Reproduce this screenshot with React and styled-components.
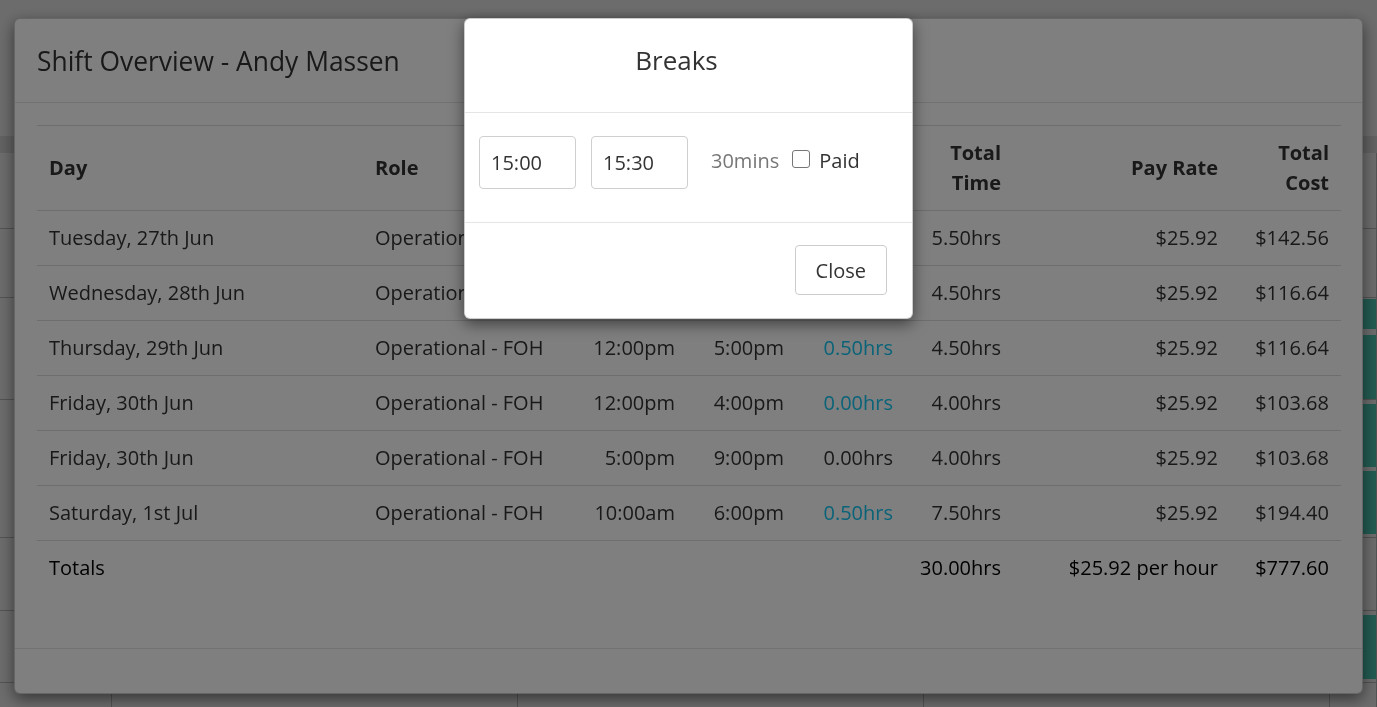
import React from 'react';
import styled, { createGlobalStyle } from 'styled-components';

const GlobalStyle = createGlobalStyle`
  html, body { margin: 0; padding: 0; }
  body {
    font-family: "Open Sans", "Noto Sans", sans-serif;
    color: #333;
    background: #fff;
    overflow: hidden;
  }
  *, *::before, *::after { box-sizing: border-box; }
`;

/* ---------- background roster page ---------- */
const Page = styled.div`
  height: 707px;
  overflow: hidden;
  background: #fff;
  display: flex;
  flex-direction: column;
`;
const PageTop = styled.div`
  height: 136px;
  flex: none;
`;
const Band = styled.div`
  height: 17px;
  flex: none;
  background: #e6e6e6;
`;
const RosterRow = styled.div`
  flex: none;
  display: grid;
  grid-template-columns: 112px 406px 406px 406px 1fr;
  height: ${(p) => p.$h}px;
  border-bottom: 1px solid #c4c4c4;
`;
const RosterCell = styled.div`
  border-right: 1px solid #c4c4c4;
  display: flex;
  flex-direction: column;
  gap: ${(p) => p.$gap || 0}px;
  padding: ${(p) => p.$pad || 0}px 0 ${(p) => p.$pad || 0}px 4px;
`;
const ShiftBlock = styled.div`
  height: ${(p) => p.$h}px;
  background: #52d8c1;
  border-radius: 2px 0 0 2px;
`;

/* ---------- overlays ---------- */
const Backdrop = styled.div`
  position: fixed;
  inset: 0;
  background: rgba(0, 0, 0, ${(p) => p.$o});
`;
const ModalLayer = styled.div`
  position: fixed;
  inset: 0;
  display: flex;
  justify-content: center;
  align-items: flex-start;
  padding-top: 18px;
`;
const ModalBox = styled.div`
  width: ${(p) => p.$w}px;
  background: #fff;
  border: 1px solid rgba(0, 0, 0, 0.2);
  border-radius: 6px;
  box-shadow: 0 5px 15px rgba(0, 0, 0, 0.5);
  overflow: hidden;
`;

/* ---------- shift overview modal ---------- */
const ShiftHeader = styled.div`
  height: 84px;
  display: flex;
  align-items: center;
  padding: 0 22px;
  border-bottom: 1px solid #e5e5e5;
`;
const Title = styled.h4`
  margin: 0;
  font-size: ${(p) => p.$size || 26}px;
  font-weight: 400;
  line-height: 36px;
  color: #333;
  text-align: ${(p) => p.$align || 'left'};
`;
const ShiftBody = styled.div`
  padding: 22px 21px 53px 22px;
`;
const Table = styled.div`
  display: flex;
  flex-direction: column;
`;
const Row = styled.div`
  display: grid;
  grid-template-columns: 326px 207px 117px 109px 109px 108px 217px 1fr;
  align-items: center;
  border-top: 1px solid #dcdcdc;
  min-height: ${(p) => (p.$head ? 85 : 55)}px;
  color: ${(p) => (p.$total ? '#000' : '#333')};
`;
const Cell = styled.div`
  padding: 12px;
  font-size: 20px;
  line-height: 30px;
  font-weight: ${(p) => (p.$bold ? 700 : 400)};
  text-align: ${(p) => (p.$right ? 'right' : 'left')};
  color: ${(p) => (p.$link ? '#14c6f0' : 'inherit')};
  white-space: ${(p) => (p.$bold ? 'normal' : 'nowrap')};
`;
const ShiftFooter = styled.div`
  height: 45px;
  border-top: 1px solid #e5e5e5;
`;

/* ---------- breaks modal ---------- */
const BreaksHeader = styled.div`
  height: 94px;
  padding: 23px 24px 0 0;
  border-bottom: 1px solid #e5e5e5;
`;
const BreaksBody = styled.div`
  height: 110px;
  padding: 23px 14px 0 14px;
  border-bottom: 1px solid #e5e5e5;
  display: flex;
  align-items: flex-start;
`;
const BreakRow = styled.div`
  display: flex;
  align-items: center;
`;
const TimeInput = styled.input`
  width: 97px;
  height: 53px;
  margin-right: ${(p) => p.$mr || 0}px;
  padding: 0 11px;
  border: 1px solid #cfcfcf;
  border-radius: 4px;
  font: inherit;
  font-size: 20px;
  color: #333;
  background: #fff;
  outline: none;
`;
const Duration = styled.span`
  margin: 0 0 3px 23px;
  font-size: 20px;
  line-height: 30px;
  color: #777;
`;
const CheckLabel = styled.label`
  display: flex;
  align-items: center;
  margin: 0 0 3px 13px;
  font-size: 20px;
  line-height: 30px;
  color: #333;
`;
const CheckBox = styled.input`
  appearance: none;
  width: 18px;
  height: 18px;
  margin: 0 9px 4px 0;
  border: 1px solid #767676;
  border-radius: 3px;
  background: #fff;
`;
const BreaksFooter = styled.div`
  height: 95px;
  padding: 22px 25px 0 0;
  display: flex;
  justify-content: flex-end;
  align-items: flex-start;
`;
const Button = styled.button`
  height: 50px;
  padding: 0 20px;
  border: 1px solid #cccccc;
  border-radius: 4px;
  background: #fff;
  font: inherit;
  font-size: 20px;
  color: #333;
  cursor: pointer;
`;

const headers = [
  ['Day', false],
  ['Role', false],
  ['Start', true],
  ['Finish', true],
  ['Breaks', true],
  ['Total Time', true],
  ['Pay Rate', true],
  ['Total Cost', true],
];

const shifts = [
  ['Tuesday, 27th Jun', '11:00am', '5:00pm', '0.50hrs', true, '5.50hrs', '$142.56'],
  ['Wednesday, 28th Jun', '12:00pm', '5:00pm', '0.50hrs', true, '4.50hrs', '$116.64'],
  ['Thursday, 29th Jun', '12:00pm', '5:00pm', '0.50hrs', true, '4.50hrs', '$116.64'],
  ['Friday, 30th Jun', '12:00pm', '4:00pm', '0.00hrs', true, '4.00hrs', '$103.68'],
  ['Friday, 30th Jun', '5:00pm', '9:00pm', '0.00hrs', false, '4.00hrs', '$103.68'],
  ['Saturday, 1st Jul', '10:00am', '6:00pm', '0.50hrs', true, '7.50hrs', '$194.40'],
];

const rosterRows = [
  { h: 76, blocks: [] },
  { h: 69, blocks: [] },
  { h: 102, pad: 1, gap: 6, blocks: [30, 64] },
  { h: 138, pad: 4, gap: 4, blocks: [63, 63] },
  { h: 73, blocks: [] },
  { h: 72, pad: 4, gap: 0, blocks: [64] },
  { h: 40, blocks: [] },
];

function Roster() {
  return (
    <Page>
      <PageTop />
      <Band />
      {rosterRows.map((r, i) => (
        <RosterRow key={i} $h={r.h}>
          <RosterCell />
          <RosterCell />
          <RosterCell />
          <RosterCell />
          <RosterCell $pad={r.pad} $gap={r.gap}>
            {r.blocks.map((b, j) => (
              <ShiftBlock key={j} $h={b} />
            ))}
          </RosterCell>
        </RosterRow>
      ))}
    </Page>
  );
}

export default function App() {
  return (
    <>
      <GlobalStyle />
      <Roster />
      <Backdrop $o={0.15} />
      <ModalLayer>
        <ModalBox $w={1349}>
          <ShiftHeader>
            <Title $size={26.4}>Shift Overview - Andy Massen</Title>
          </ShiftHeader>
          <ShiftBody>
            <Table>
              <Row $head>
                {headers.map(([h, right]) => (
                  <Cell key={h} $bold $right={right}>
                    {h}
                  </Cell>
                ))}
              </Row>
              {shifts.map((s, i) => (
                <Row key={i}>
                  <Cell>{s[0]}</Cell>
                  <Cell>Operational - FOH</Cell>
                  <Cell $right>{s[1]}</Cell>
                  <Cell $right>{s[2]}</Cell>
                  <Cell $right $link={s[4]}>
                    {s[3]}
                  </Cell>
                  <Cell $right>{s[5]}</Cell>
                  <Cell $right>$25.92</Cell>
                  <Cell $right>{s[6]}</Cell>
                </Row>
              ))}
              <Row $total>
                <Cell>Totals</Cell>
                <Cell />
                <Cell />
                <Cell />
                <Cell />
                <Cell $right>30.00hrs</Cell>
                <Cell $right>$25.92 per hour</Cell>
                <Cell $right>$777.60</Cell>
              </Row>
            </Table>
          </ShiftBody>
          <ShiftFooter />
        </ModalBox>
      </ModalLayer>
      <Backdrop $o={0.5} />
      <ModalLayer>
        <ModalBox $w={449}>
          <BreaksHeader>
            <Title $align="center">Breaks</Title>
          </BreaksHeader>
          <BreaksBody>
            <BreakRow>
              <TimeInput defaultValue="15:00" $mr={15} />
              <TimeInput defaultValue="15:30" />
              <Duration>30mins</Duration>
              <CheckLabel>
                <CheckBox type="checkbox" />
                Paid
              </CheckLabel>
            </BreakRow>
          </BreaksBody>
          <BreaksFooter>
            <Button>Close</Button>
          </BreaksFooter>
        </ModalBox>
      </ModalLayer>
    </>
  );
}
